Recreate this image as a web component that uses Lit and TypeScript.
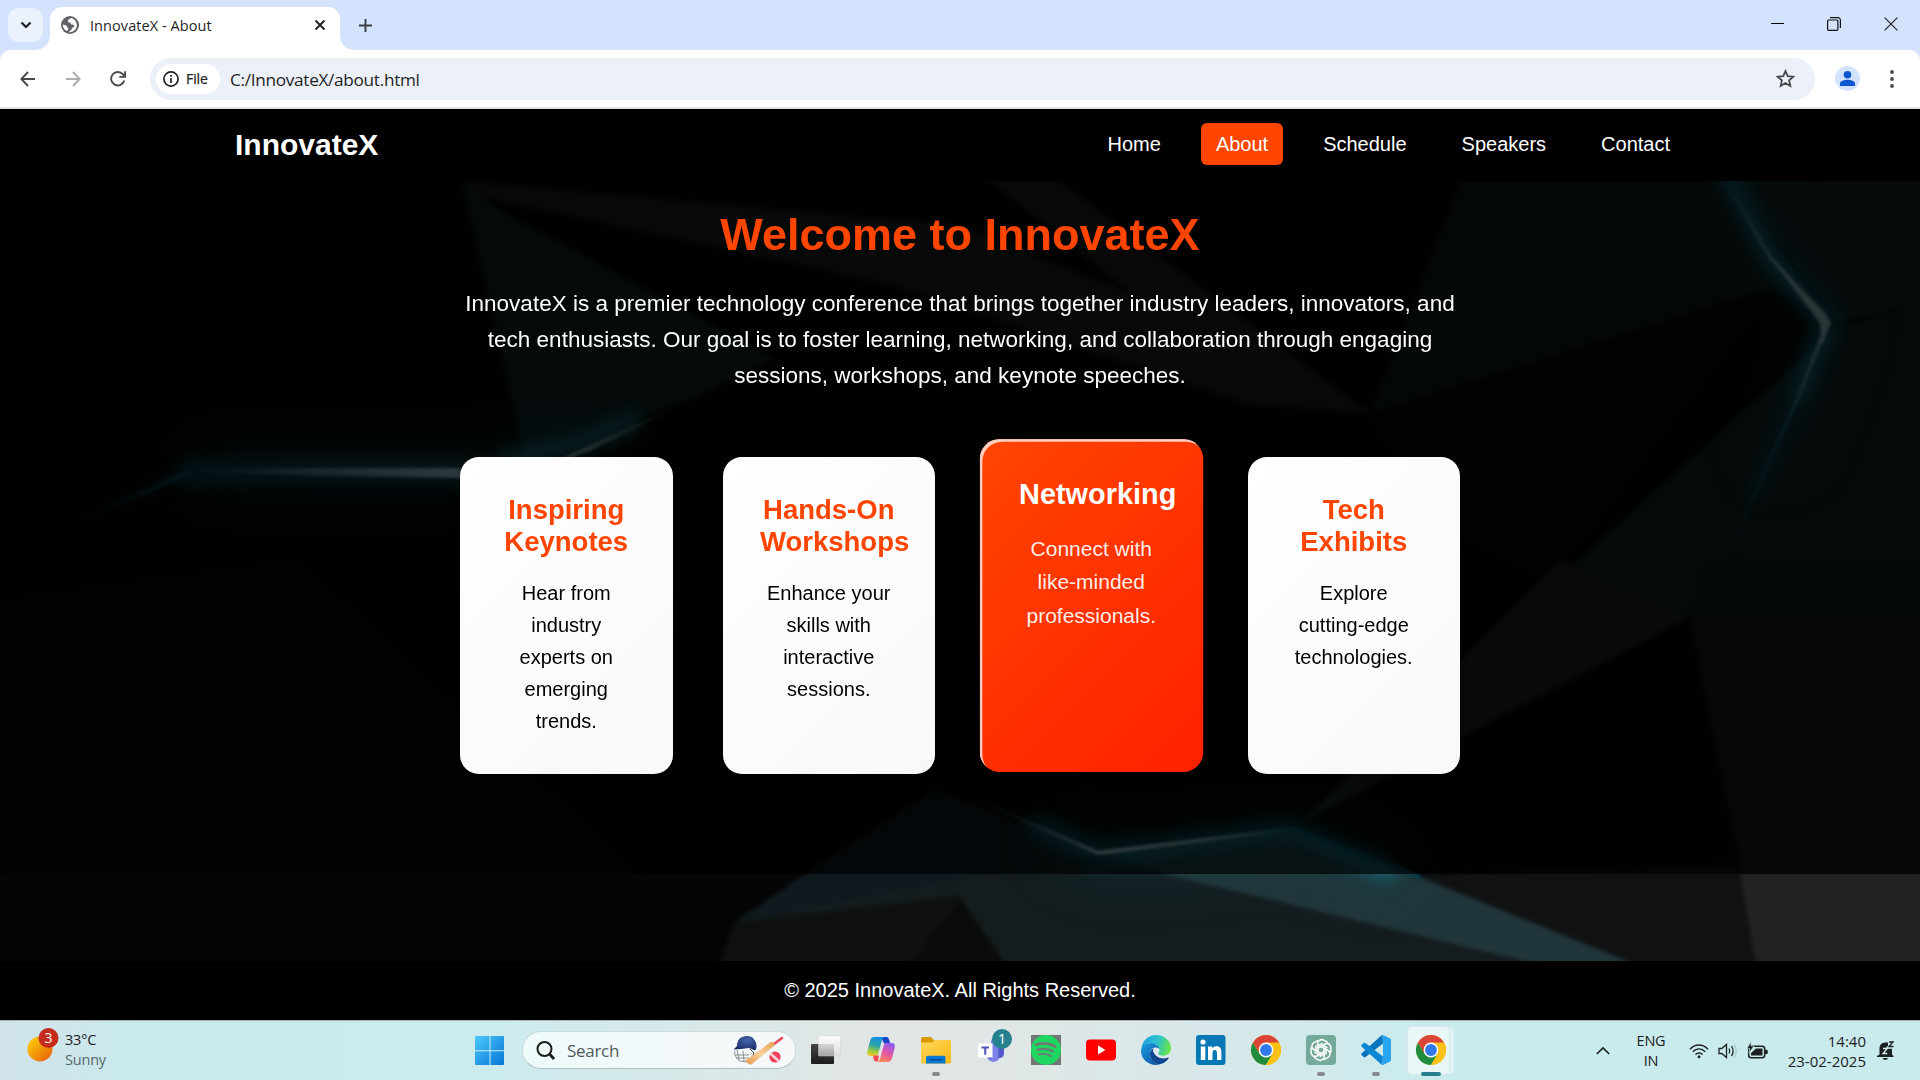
import { LitElement, html, css, svg } from "lit";
import { customElement } from "lit/decorators.js";

const chromeLogo = () => svg`
  <circle cx="15" cy="15" r="15" fill="#fbc116"/>
  <path d="M2 7.5 A15 15 0 0 0 15 30 L21.5 18.7 L15 15 L8.5 18.8 Z" fill="#1e8e3e"/>
  <path d="M28 7.5 A15 15 0 0 1 15 30 L21.5 18.8 L15 7.5 Z" fill="#fbc116"/>
  <path d="M2 7.5 A15 15 0 0 1 28 7.5 L15 7.5 L9 12 L8.5 18.8 Z" fill="#db4437"/>
  <circle cx="15" cy="15" r="7.4" fill="#fff"/>
  <circle cx="15" cy="15" r="5.9" fill="#3079ea"/>`;

@customElement("browser-chrome")
class BrowserChrome extends LitElement {
  static styles = css`
    :host { display: block; background: #d3e2fd; font-family: "Open Sans", "Noto Sans", sans-serif; color: #1f1f1f; }
    svg { display: block; flex: none; }
    .strip { display: flex; height: 50px; align-items: flex-end; }
    .menu { width: 35px; height: 34px; margin: 0 7px 8px 8px; border-radius: 11px; background: #ebf1fd; display: grid; place-items: center; }
    .tab { position: relative; width: 290px; height: 43px; box-sizing: border-box; background: #fff; border-radius: 12px 12px 0 0; display: flex; align-items: center; padding: 0 14px 7px 11px; }
    .tab::before, .tab::after { content: ""; position: absolute; bottom: 0; width: 14px; height: 14px; }
    .tab::before { left: -14px; background: radial-gradient(circle at 0 0, transparent 13.5px, #fff 14px); }
    .tab::after { right: -14px; background: radial-gradient(circle at 100% 0, transparent 13.5px, #fff 14px); }
    .title { flex: 1; margin-left: 11px; font-size: 14.5px; line-height: 20px; letter-spacing: 0.07px; position: relative; top: 1px; }
    .plus { margin: 0 0 18px 19px; }
    .win { margin-left: auto; display: flex; align-items: center; gap: 43px; padding: 0 22px 19px 0; }
    .bar { display: flex; align-items: center; background: #fff; border-radius: 10px 10px 0 0; border-bottom: 2px solid #dfe4e3; box-sizing: border-box; height: 59px; }
    .nav { flex: none; display: flex; gap: 29px; padding-left: 20px; width: 150px; box-sizing: border-box; }
    .omni { flex: none; width: 1665px; height: 42px; border-radius: 21px; background: #ecf0f9; display: flex; align-items: center; box-sizing: border-box; padding: 0 20px 0 6px; }
    .chip { width: 64px; height: 30px; border-radius: 15px; background: #fff; display: flex; align-items: center; gap: 7px; box-sizing: border-box; padding-left: 7px; font-size: 14px; letter-spacing: -0.1px; -webkit-text-stroke: 0.25px #1f1f1f; }
    .url { flex: 1; margin-left: 10px; font-size: 17.2px; letter-spacing: -0.3px; position: relative; top: 0.5px; }
    .avatar { margin-left: 20px; }
    .dots { margin-left: 26px; }
  `;
  render() {
    return html`
      <div class="strip">
        <div class="menu"><svg width="12" height="8" viewBox="0 0 12 8"><path d="M1.5 1.5 6 6 10.5 1.5" fill="none" stroke="#1f1f1f" stroke-width="2.2"/></svg></div>
        <div class="tab">
          <svg width="18" height="18" viewBox="0 0 18 18">
            <circle cx="9" cy="9" r="9" fill="#5f6368"/>
            <path d="M10.5 1.9c-1.800.4-3.600 1.700-3.700 3 .1 1.200 1 1.800 2.400 1.700.6.6.2 1.600 1.400 1.800 1.300 0 2.300.2 2.600 1.500.2 1.100-.5 1.700-1.500 1.700-1 .3-.6 1.500-1.500 2.300-.8.8-2 1.300-2.600 2.300 3.600.6 7.300-1.800 8.200-5.600.6-3.700-1.600-7.400-5.300-8.700ZM1.800 8.600c.1 2.300.9 4.200 2.500 5.600.9.5 2.400.7 2.800-.2.5-1.100-.2-1.700-.6-2.500-.3-1.300-1.600-2-2.700-2.400Z" fill="#fff"/>
          </svg>
          <span class="title">InnovateX - About</span>
          <svg width="12" height="12" viewBox="0 0 12 12"><path d="m1.500 1.500 9 9m0-9-9 9" stroke="#1f1f1f" stroke-width="1.900"/></svg>
        </div>
        <svg class="plus" width="13" height="13" viewBox="0 0 13 13"><path d="M6.500 0v13M0 6.500h13" stroke="#3c4043" stroke-width="1.900"/></svg>
        <div class="win">
          <svg width="13" height="14" viewBox="0 0 13 14"><path d="M0 6.500h13" stroke="#000"/></svg>
          <svg width="14" height="14" viewBox="0 0 14 14" fill="none" stroke="#111" stroke-width="1.200"><rect x=".6" y="3" width="10.300" height="10.300" rx="1"/><path d="M3 .6h7.900a2.500 2.500 0 0 1 2.500 2.500v8"/></svg>
          <svg width="14" height="14" viewBox="0 0 14 14"><path d="m.6.600 12.800 12.800m0-12.800L.6 13.400" stroke="#222" stroke-width="1.200"/></svg>
        </div>
      </div>
      <div class="bar">
        <div class="nav">
          <svg width="16" height="16" viewBox="0 0 16 16" fill="none" stroke="#47494c" stroke-width="1.900"><path d="M15 8H1.500M8 1 1.400 8 8 15"/></svg>
          <svg width="16" height="16" viewBox="0 0 16 16" fill="none" stroke="#a9abad" stroke-width="1.900"><path d="M1 8h13.500M8 1l6.600 7L8 15"/></svg>
          <svg width="16" height="16" viewBox="0 0 16 16" fill="none" stroke="#47494c" stroke-width="1.900"><path d="M14.300 9.500A6.700 6.700 0 1 1 13 3.400L14.700 5.300M15 .2v5.700H9.300"/></svg>
        </div>
        <div class="omni">
          <div class="chip">
            <svg width="16" height="16" viewBox="0 0 16 16"><circle cx="8" cy="8" r="7.100" fill="none" stroke="#1f1f1f" stroke-width="1.700"/><path d="M8 7v5M8 4v1.800" stroke="#1f1f1f" stroke-width="1.700"/></svg>
            <span>File</span>
          </div>
          <span class="url">C:/InnovateX/about.html</span>
          <svg width="19" height="19" viewBox="0 0 19 19"><path d="m9.500 2 2.200 5.200 5.600.5-4.200 3.700 1.200 5.500-4.800-2.900-4.800 2.900 1.200-5.500L1.700 7.700l5.600-.5Z" fill="none" stroke="#47494c" stroke-width="1.800"/></svg>
        </div>
        <svg class="avatar" width="25" height="25" viewBox="0 0 25 25"><circle cx="12.500" cy="12.500" r="12.500" fill="#d3e3fd"/><circle cx="12.500" cy="8.800" r="3.800" fill="#0b57d0"/><path d="M5 20v-2.500c0-2.600 4.500-3.700 7.500-3.700s7.500 1.100 7.500 3.700V20Z" fill="#0b57d0"/></svg>
        <svg class="dots" width="12" height="18" viewBox="0 0 12 18" fill="#47494c"><circle cx="6" cy="2" r="1.900"/><circle cx="6" cy="9" r="1.900"/><circle cx="6" cy="16" r="1.900"/></svg>
      </div>`;
  }
}

@customElement("site-backdrop")
class SiteBackdrop extends LitElement {
  static styles = css`
    :host { display: block; }
    svg { display: block; width: 100%; height: 100%; }
    filter { color-interpolation-filters: sRGB; }
  `;
  render() {
    return html`<svg viewBox="0 181 1920 780" preserveAspectRatio="none">
      <defs>
        <filter id="fine" filterUnits="userSpaceOnUse" x="-100" y="0" width="2200" height="1100"><feGaussianBlur stdDeviation="1.500"/></filter>
        <filter id="glow" filterUnits="userSpaceOnUse" x="-100" y="0" width="2200" height="1100"><feGaussianBlur stdDeviation="8"/></filter>
        <filter id="haze" filterUnits="userSpaceOnUse" x="-100" y="0" width="2200" height="1100"><feGaussianBlur stdDeviation="30"/></filter>
        <filter id="edge" filterUnits="userSpaceOnUse" x="-100" y="0" width="2200" height="1100"><feGaussianBlur stdDeviation="2"/></filter>
        <linearGradient id="lg" gradientUnits="userSpaceOnUse" x1="70" y1="0" x2="460" y2="0"><stop offset="0" stop-color="#0a2c3a" stop-opacity="0"/><stop offset=".32" stop-color="#10495a"/><stop offset="1" stop-color="#98c4cc"/></linearGradient>
        <linearGradient id="lg2" gradientUnits="userSpaceOnUse" x1="560" y1="0" x2="695" y2="0"><stop offset="0" stop-color="#b0d2d4"/><stop offset="1" stop-color="#2c5054" stop-opacity="0"/></linearGradient>
        <linearGradient id="rg" gradientUnits="userSpaceOnUse" x1="0" y1="181" x2="0" y2="620"><stop offset="0" stop-color="#0c4b58"/><stop offset=".3" stop-color="#a0c4c4"/><stop offset=".55" stop-color="#155f70"/><stop offset="1" stop-color="#062028" stop-opacity="0"/></linearGradient>
        <linearGradient id="bg" gradientUnits="userSpaceOnUse" x1="970" y1="0" x2="1440" y2="0"><stop offset="0" stop-color="#0c4b58" stop-opacity="0"/><stop offset=".28" stop-color="#a4c8cc"/><stop offset=".5" stop-color="#7ca8ac"/><stop offset=".7" stop-color="#0a5a6a"/><stop offset="1" stop-color="#06404c"/></linearGradient>
      </defs>
      <rect y="181" width="1920" height="780" fill="#050505"/>
      <g filter="url(#edge)">
        <path d="M462 181 960 225 1250 340 1370 413 1250 405 890 285 470 195Z" fill="#1a1b1b"/>
        <path d="M975 170h70l325 243-180-73Z" fill="#1b1b1b"/>
        <path d="M462 181 500 210 775 358 690 400 525 460Z" fill="#101f22"/>
        <path d="M1370 413 1465 171H1728l94 143-50-26Z" fill="#10191a"/>
        <path d="M1775 288 1370 413 1430 520 1550 580Z" fill="#060a0a"/>
        <path d="M1728 171h202v130l-92 22Z" fill="#142224"/>
        <path d="M1835 328 1930 300v300l-220 20-155-40Z" fill="#101e20"/>
        <path d="M1560 560 1690 617 1465 735 1300 824Z" fill="#1c2423"/>
        <path d="M1690 617h240v257h-188Z" fill="#171919"/>
        <path d="M1706 560h224v57h-240Z" fill="#101c1e"/>
        <path d="M935 790 1098 852 1000 900 735 922 806 873Z" fill="#10191e"/>
        <path d="M735 922 1000 872 1130 860 1535 961V975H1000L960 905Z" fill="#141c1e"/>
        <path d="M735 922 960 896 1003 961V975H715Z" fill="#0e1110"/>
        <path d="M960 900 1003 961V975H900Z" fill="#0b0b0b"/>
        <path d="M1098 852 1293 829 1413 874 1640 966 1545 966 1165 874Z" fill="#21363a"/>
        <path d="M1413 874 1740 864 1757 970H1650Z" fill="#101113"/>
        <path d="M1740 874h190v96h-173Z" fill="#222"/>
        <path d="M0 600 300 560 640 874H0Z" fill="#06080b"/>
      </g>
      <g fill="none" filter="url(#haze)">
        <path d="M190 470H470L600 440" stroke="#0a6575" stroke-width="30" opacity=".45"/>
        <path d="M1735 200 1828 322 1775 460" stroke="#0a5564" stroke-width="22" opacity=".4"/>
        <path d="M1060 830 1110 855 1293 835 1400 870" stroke="#0a6575" stroke-width="26" opacity=".4"/>
      </g>
      <g fill="none" filter="url(#glow)">
        <path d="M80 522 190 470H470L560 452 640 422" stroke="url(#lg)" stroke-width="10" opacity=".35"/>
        <path d="M180 472H470" stroke="#0b6070" stroke-width="26" opacity=".5"/>
        <path d="M500 462 580 444 640 418" stroke="#0d7b85" stroke-width="20" opacity=".55"/>
        <path d="M1725 171 1771 258 1828 322 1797 400" stroke="#0f8ba0" stroke-width="18" opacity=".65"/>
        <path d="M1797 400 1752 500" stroke="#0b6070" stroke-width="12" opacity=".5"/>
        <path d="M1030 822 1100 855 1293 830" stroke="#0a8294" stroke-width="20" opacity=".55"/>
        <path d="M1293 832 1395 874" stroke="#0a8294" stroke-width="16" opacity=".6"/>
      </g>
      <g fill="none" filter="url(#fine)">
        <path d="M75 522 190 472" stroke="url(#lg)" stroke-width="6"/>
        <path d="M188 471 300 468 461 468V478L300 475Z" fill="url(#lg)"/>
        <path d="M555 462 695 398 590 450Z" fill="url(#lg2)" stroke="url(#lg2)"/>
        <path d="M1725 181 1771 258 1828 322 1797 400 1752 500 1713 610" stroke="url(#rg)" stroke-width="3.500" stroke-linejoin="round"/>
        <path d="M1771 258 1826 314 1831 323 1822 345 1820 323Z" fill="#8fb4b4"/>
        <path d="M972 798 1098 853 1293 829 1420 877" stroke="url(#bg)" stroke-width="4"/>
      </g>
    </svg>`;
  }
}

@customElement("feature-card")
class FeatureCard extends LitElement {
  static properties = { heading: {}, text: {}, active: { type: Boolean, reflect: true } };
  declare heading: string;
  declare text: string;
  declare active: boolean;
  static styles = css`
    :host { display: block; box-sizing: border-box; padding: 36.5px 37.5px; border-radius: 19px; background: linear-gradient(135deg, #fff, #f8f8f8); color: #000; text-align: center; box-shadow: 0 6px 15px rgba(0, 0, 0, 0.3); }
    :host([active]) { background: linear-gradient(135deg, #ff4500, #ff2000); color: #fff; transform: translateY(-10px) scale(1.05); box-shadow: inset 2.5px 2.5px 0 rgba(255, 255, 255, 0.75); }
    .heading { margin: 0 0 19.5px; font-size: 27.5px; line-height: 32px; font-weight: 700; color: #ff4500; }
    .body { margin: 0; font-size: 20px; line-height: 32px; }
    :host([active]) .heading { color: #fff; }
    :host([active]) .body { color: rgba(255, 255, 255, 0.93); }
  `;
  render() {
    return html`<h3 class="heading">${this.heading}</h3><p class="body">${this.text}</p>`;
  }
}

@customElement("site-page")
class SitePage extends LitElement {
  static styles = css`
    :host { display: flex; flex-direction: column; height: 911px; background: #000; color: #fff; font-family: "Liberation Sans", Arial, sans-serif; }
    .header { height: 72px; display: flex; align-items: center; justify-content: space-between; padding: 0 235px; }
    .brand { font-size: 30px; line-height: 34px; font-weight: 700; }
    .links { display: flex; gap: 25px; margin-bottom: 2px; }
    .link { font-size: 20px; line-height: 22px; padding: 10px 15px; border-radius: 6px; }
    .link.on { background: #ff4500; }
    .main { flex: 1; position: relative; display: flex; flex-direction: column; }
    .backdrop { position: absolute; inset: 0; }
    .about { position: relative; height: 693px; background: rgba(0, 0, 0, 0.7); display: flex; flex-direction: column; align-items: center; box-sizing: border-box; padding-top: 28px; }
    .hero { margin: 0; font-size: 45px; line-height: 51px; font-weight: 700; color: #ff4500; }
    .intro { margin: 25.5px 0 0; width: 1000px; text-align: center; font-size: 22.5px; line-height: 36px; }
    .cards { margin-top: 63.5px; width: 1000px; height: 317px; display: grid; grid-template-columns: repeat(4, 212.5px); gap: 50px; }
    .footer { height: 59px; display: grid; place-items: center; font-size: 20px; }
  `;
  render() {
    const links = ["Home", "About", "Schedule", "Speakers", "Contact"];
    const cards = [
      ["Inspiring Keynotes", "Hear from industry experts on emerging trends."],
      ["Hands-On Workshops", "Enhance your skills with interactive sessions."],
      ["Networking", "Connect with like-minded professionals."],
      ["Tech Exhibits", "Explore cutting-edge technologies."],
    ];
    return html`
      <header class="header">
        <div class="brand">InnovateX</div>
        <nav class="links">${links.map((l) => html`<a class="link ${l === "About" ? "on" : ""}">${l}</a>`)}</nav>
      </header>
      <main class="main">
        <site-backdrop class="backdrop"></site-backdrop>
        <section class="about">
          <h1 class="hero">Welcome to InnovateX</h1>
          <p class="intro">InnovateX is a premier technology conference that brings together industry leaders, innovators, and tech enthusiasts. Our goal is to foster learning, networking, and collaboration through engaging sessions, workshops, and keynote speeches.</p>
          <div class="cards">
            ${cards.map(([h, t]) => html`<feature-card .heading=${h} .text=${t} ?active=${h === "Networking"}></feature-card>`)}
          </div>
        </section>
      </main>
      <footer class="footer">© 2025 InnovateX. All Rights Reserved.</footer>`;
  }
}

const petals = [0, 60, 120, 180, 240, 300];

const apps: { icon: unknown; mark?: "dot" | "on" }[] = [
  { icon: svg`<defs><linearGradient id="tv" x1="0" y1="0" x2="0" y2="1"><stop offset="0" stop-color="#454545"/><stop offset="1" stop-color="#1c1c1c"/></linearGradient><linearGradient id="tw" x1="0" y1="0" x2="0" y2="1"><stop offset="0" stop-color="#fff" stop-opacity=".95"/><stop offset="1" stop-color="#dcdcdc" stop-opacity=".68"/></linearGradient></defs><rect y="9" width="23" height="20" rx="1" fill="url(#tv)"/><rect x="7.500" y="1" width="22" height="20" rx="1" fill="url(#tw)" stroke="#d4d4d4" stroke-width=".5"/>` },
  { icon: svg`<defs><linearGradient id="ca" x1=".5" y1="0" x2=".3" y2="1"><stop offset="0" stop-color="#0d91e0"/><stop offset=".45" stop-color="#31a4a8"/><stop offset=".75" stop-color="#9ccc3c"/><stop offset="1" stop-color="#f5c52c"/></linearGradient><linearGradient id="cb" x1=".7" y1="0" x2=".3" y2="1"><stop offset="0" stop-color="#8f5cf0"/><stop offset=".5" stop-color="#e155a8"/><stop offset="1" stop-color="#fb8a56"/></linearGradient></defs>
    <path d="M15 2h5.500c1.700 0 2.300 1.500 2.700 3l1 3.500H18Z" fill="#1b44c8"/><path d="M8 2h11c-2 0-2.700 2-3.200 3.800L12.500 18c-.6 2-1.500 3-3.500 3H4.500C1.500 21 .7 18.500 1.500 15.500L4 6C4.800 3.500 6 2 8 2Z" fill="url(#ca)"/><path d="M7 20.500h6l-1 6h-2c-2 0-2.300-1.500-3-6Z" fill="#ef4b50"/><path d="M22 27H11c2 0 2.700-2 3.200-3.800L17.500 11c.6-2 1.500-3 3.500-3h5c2.500 0 3.500 2 2.700 5L26 23c-.8 2.500-2 4-4 4Z" fill="url(#cb)"/>` },
  { icon: svg`<defs><linearGradient id="fy" x1="0" y1="0" x2="1" y2="1"><stop offset="0" stop-color="#ffd75c"/><stop offset="1" stop-color="#fbb917"/></linearGradient></defs><path d="M0 4c0-1 .6-2 1.800-2H10l3.500 3.500H27L12 10H0Z" fill="#d99a00"/><path d="M0 7.500h11L15 5h13.500C29.500 5 30 5.600 30 6.500V27c0 1-.6 1.500-1.500 1.500H1.500C.6 28.500 0 28 0 27Z" fill="url(#fy)"/><path d="M5 28.500V23c0-1.400.8-2.200 2-2.200h15.500c1.300 0 2 .8 2 2.200v5.500Z" fill="#0b78d0"/><path d="M8.500 24.700h12.500" stroke="#084d93" stroke-width="1.400"/>`, mark: "dot" },
  { icon: svg`<circle cx="19" cy="7" r="4" fill="#7b83eb"/><path d="M11 10h13v10c0 4-2.700 6.800-6.500 6.800S11 24 11 20Z" fill="#7b83eb"/><path d="M22 10h6v8c0 3-1.500 5-5.500 5Z" fill="#5059c9"/><path d="M11 10h5v14h-3c-1.300-1-2-2.500-2-4Z" fill="#5a63cf"/><rect x="2" y="8.500" width="14.500" height="14" fill="#fff"/><path d="M5.500 12.500h7.500M9.250 12v7.800" stroke="#4b53bc" stroke-width="2"/><circle cx="26" cy="4" r="10" fill="#26818f"/><text x="26" y="9" text-anchor="middle" font-size="15" fill="#fff">1</text>` },
  { icon: svg`<rect width="30" height="30" fill="#757575"/><circle cx="15" cy="15" r="15" fill="#1ed760"/><g fill="none" stroke="#6f7a72" stroke-linecap="round"><path d="M5.500 9.500c6-1.700 13-1.200 18.500 2" stroke-width="2.800"/><path d="M6.500 14.700c5.500-1.500 11-.9 15.500 1.800" stroke-width="2.300"/><path d="M7.500 19.500c4.500-1.200 9-.7 12.700 1.500" stroke-width="1.900"/></g>` },
  { icon: svg`<rect y="4.500" width="30" height="21" rx="4" fill="#f00"/><path d="M12 10.500v9l7.500-4.500Z" fill="#fff"/>` },
  { icon: svg`<defs><linearGradient id="eg" x1="0" y1=".3" x2="1" y2=".5"><stop offset="0" stop-color="#1aa3e0"/><stop offset=".55" stop-color="#2fc3c8"/><stop offset="1" stop-color="#6ae544"/></linearGradient><linearGradient id="eb" x1="0" y1="0" x2="1" y2="1"><stop offset="0" stop-color="#1b9de2"/><stop offset="1" stop-color="#0b4fa0"/></linearGradient></defs>
    <path d="M.5 13C1.500 5.500 7.500 0 15 0c8.500 0 15 6 15 13 0 5-3.800 7.700-7.800 7.700-3 0-5-1-5-2.200 0-.8 1.300-1.500 1.300-3.500 0-3-3.500-6-8.500-6C5.500 9 2 11 .5 13Z" fill="url(#eg)"/>
    <path d="M.5 13C2 10 5.500 8.500 9.500 8.500c5 0 8.500 2.500 9 5.500-1-1-2.500-1.500-4-1.500-3.500 0-5.500 3-5.500 6.500 0 5 3.500 9 9 10.600C9 31.500 0 25 0 16Z" fill="url(#eb)"/>
    <path d="M11.500 14c-3.500 4-1.500 11 5 13 4 1 8 .2 11-3.500.5-.6 0-1.200-.8-.8-5.500 2-13.500.3-15.200-8.700Z" fill="#0d3f86"/>
    <path d="M9 19c0 5 3.500 9.500 9 10.600 3.500-.6 7-2.500 9.300-5.800-4 2-9 2-12.300-1C12 20.500 11 17 12.500 13.500 10 14.500 9 17 9 19Z" fill="#104a94"/>` },
  { icon: svg`<rect width="29.500" height="30" rx="3" fill="#0877b5"/><circle cx="7" cy="7" r="2.600" fill="#fff"/><path d="M4.800 11.500h4.500V25H4.800ZM12 11.500h4.200v1.900c.8-1.400 2.300-2.200 4.200-2.200 4 0 5 2.600 5 6.300V25H21v-6.500c0-1.900-.3-3.400-2.200-3.400S16.500 16.500 16.500 18.500V25H12Z" fill="#fff"/>` },
  { icon: chromeLogo() },
  { icon: svg`<rect width="30" height="30" rx="4" fill="#74aa9c"/><g fill="none" stroke="#fff" stroke-width="1.500" stroke-linejoin="round">${petals.map((a) => svg`<path transform="rotate(${a} 15 15)" d="M15 11.500 20 14.300V19.500M11.800 13.200V8.500C11.800 5.500 15 3.700 17.800 5.200L22 7.700"/>`)}</g>`, mark: "dot" },
  { icon: svg`<path d="M21.500 0 22 8.500 4.500 22c-.6.500-1.300.4-1.800 0L.7 20.200c-.7-.6-.6-1.500 0-2L20 .7Z" fill="#0873bd"/><path d="M21.500 30 22 21.500 4.500 8c-.6-.5-1.300-.4-1.800 0L.7 9.800c-.7.6-.6 1.500 0 2L20 29.300Z" fill="#0a86d2"/><path d="M22 0 28.700 3.200c.8.4 1.300 1 1.300 2V24.800c0 1-.5 1.600-1.300 2L22 30c-1 .2-1.800-.5-2-1 1 .8 2 .3 2-1V2c0-1.300-1-1.800-2-1 .2-.6 1-1.200 2-1Z" fill="#27a5f2"/>`, mark: "dot" },
  { icon: chromeLogo(), mark: "on" },
];

@customElement("task-bar")
class TaskBar extends LitElement {
  static styles = css`
    :host { display: flex; align-items: stretch; height: 60px; box-sizing: border-box; border-top: 1px solid #a9b3b5; font-family: "Open Sans", "Noto Sans", sans-serif; color: #1c2021; font-size: 14.5px; line-height: 20px; background: linear-gradient(90deg, #d0e2ea 0, #c9ebee 150px, #cbebee 480px, #d5e9ea 640px, #e2e5e5 880px, #e0e6e6 1010px, #d6e8ea 1250px, #caebed 1420px, #c9ebed 100%); }
    svg { display: block; overflow: visible; flex: none; }
    .weather { width: 475px; display: flex; box-sizing: border-box; padding: 9px 0 0 27px; gap: 6px; letter-spacing: -0.2px; }
    .muted { color: #54686b; }
    .start { padding-top: 15px; width: 47px; }
    .search { width: 274px; height: 38px; margin: 10px 2.5px 0 0; box-sizing: border-box; border-radius: 20px; border: 1px solid #cddcde; border-bottom-color: #aebfc2; background: linear-gradient(90deg, #effafb, #f6f8f9); display: flex; align-items: center; padding: 0 12px 0 13px; gap: 12px; }
    .hint { flex: 1; font-size: 17px; letter-spacing: -0.3px; color: #4e5a5c; position: relative; top: 1px; }
    .apps { display: flex; }
    .app { width: 55px; display: flex; flex-direction: column; align-items: center; padding-top: 14px; box-sizing: border-box; position: relative; }
    .app.on::before { content: ""; position: absolute; left: 3.5px; top: 5px; width: 43px; height: 49px; box-sizing: border-box; border-radius: 5px; background: #e8f6f7; border: 1px solid #d7e9ea; box-shadow: 5px 0 0 -1px #e0f2f3; }
    .app svg { position: relative; }
    .mark { position: relative; margin-top: 7px; width: 8px; height: 4px; border-radius: 2px; background: #858b8c; }
    .on .mark { width: 20px; background: #26818f; }
    .tray { margin-left: auto; display: flex; align-items: center; padding-right: 26px; }
    .chev { margin-right: 21px; }
    .lang { text-align: center; width: 40px; letter-spacing: -0.2px; margin-right: 18px; }
    .icons { display: flex; align-items: center; gap: 9px; width: 80px; }
    .clock { text-align: right; width: 97px; font-size: 15px; letter-spacing: 0; margin-right: 11px; }
  `;
  render() {
    return html`
      <div class="weather">
        <svg width="32" height="40" viewBox="0 0 32 40"><defs><linearGradient id="sun" x1="0" y1="0" x2="1" y2="1"><stop offset="0" stop-color="#ffd60a"/><stop offset="1" stop-color="#e65a06"/></linearGradient></defs><circle cx="13" cy="19" r="12.500" fill="url(#sun)"/><circle cx="21.500" cy="8" r="10" fill="#c42b1c"/><text x="21.500" y="13" text-anchor="middle" font-size="14" fill="#fff">3</text></svg>
        <div><div>33°C</div><div class="muted">Sunny</div></div>
      </div>
      <div class="start"><svg width="30" height="30" viewBox="0 0 30 30"><defs><linearGradient id="w" gradientUnits="userSpaceOnUse" x1="0" y1="0" x2="30" y2="30"><stop offset="0" stop-color="#4cc9fb"/><stop offset="1" stop-color="#0273d4"/></linearGradient></defs><path d="M1 0h13.500v14.300H0V1q0-1 1-1ZM15.500 0H28q1 0 1 1v13.300H15.500ZM0 15.300h14.500V29H1q-1 0-1-1ZM15.500 15.300H29V28q0 1-1 1H15.500Z" fill="url(#w)"/></svg></div>
      <div class="search">
        <svg width="19" height="19" viewBox="0 0 19 19"><circle cx="8.500" cy="8" r="7" fill="none" stroke="#1c1c1c" stroke-width="2"/><path d="m13.500 13 4.500 5" stroke="#1c1c1c" stroke-width="2.800"/></svg>
        <span class="hint">Search</span>
        <svg width="50" height="30" viewBox="0 0 50 30">
          <defs><linearGradient id="bat" x1="0" y1="1" x2="1" y2="0"><stop offset="0" stop-color="#e59a4c"/><stop offset=".5" stop-color="#fad09a"/><stop offset="1" stop-color="#e4a254"/></linearGradient><radialGradient id="helm" cx=".6" cy=".3" r=".7"><stop offset="0" stop-color="#4566ae"/><stop offset="1" stop-color="#1c2c66"/></radialGradient></defs>
          <g fill="none" stroke="#8b9295" stroke-width="1"><path d="M2 16c-1 3 1 8 5 10l7 1M2 20h14M4 15l2 10M10 16l1 10M3 23h13"/><path d="M17 14l4 4-2 5" stroke="#34404a"/></g>
          <path d="M.5 14.500 4 11C4 4.500 8 1 14 1s9.500 5 9.500 10c0 2-.5 3.500-1.500 4.500l-6-2.500C10 14 6 14 .5 14.500Z" fill="url(#helm)"/>
          <path d="m41 9 8-6" stroke="#e04858" stroke-width="2.600" stroke-linecap="round"/>
          <path d="M12.500 25.500 37 7.500c1.500-.8 3-.5 4 .5s1 2 0 3L19 29c-1 .8-2 .8-3 0l-3.500-2.500Z" fill="url(#bat)"/>
          <circle cx="42" cy="22" r="5.600" fill="#ee3f59"/><path d="m37.500 18.500 8 7.500" stroke="#fbd3da" stroke-width="2.600"/>
        </svg>
      </div>
      <div class="apps">
        ${apps.map((a) => html`<div class="app ${a.mark === "on" ? "on" : ""}"><svg width="30" height="30" viewBox="0 0 30 30">${a.icon}</svg>${a.mark ? html`<i class="mark"></i>` : ""}</div>`)}
      </div>
      <div class="tray">
        <svg class="chev" width="14" height="8" viewBox="0 0 14 8"><path d="M.8 7 7 1l6.200 6" fill="none" stroke="#1c2021" stroke-width="1.700"/></svg>
        <div class="lang">ENG<br/>IN</div>
        <div class="icons">
          <svg width="20" height="16" viewBox="0 0 20 16" fill="none" stroke="#1c2021" stroke-width="1.400"><path d="M1 6.200c5-5.700 13-5.700 18 0M3.800 8.800c3.600-3.900 8.800-3.900 12.400 0M6.500 11.500c2-2.100 5-2.100 7 0"/><circle cx="10" cy="13.700" r="1.500" fill="#1c2021" stroke="none"/></svg>
          <svg width="20" height="16" viewBox="0 0 20 16" fill="none" stroke="#1c2021" stroke-width="1.300"><path d="M1 5.500h2.800L8.500 1.500v13L3.800 10.500H1ZM11 5.500q1.600 2.500 0 5M13.500 3q3.200 5 0 10"/><path d="M16 1.200q4.500 6.800 0 13.600" stroke="#a9c5c8"/></svg>
          <svg width="21" height="17" viewBox="0 0 21 17"><rect x="1.700" y="4.200" width="16" height="11.500" rx="2.500" fill="none" stroke="#1c2021" stroke-width="1.500"/><path d="M9 6.500h6.500v7H4V11l5-4.500ZM18 7.700h1.500q1.200 0 1.200 1.200v2q0 1.200-1.200 1.200H18Z" fill="#1c2021"/><path d="M4-.5 0 6.500h2.700L2 11l5-7H4Z" fill="#1c2021" stroke="#c9ebed" stroke-width=".6"/></svg>
        </div>
        <div class="clock">14:40<br/>23-02-2025</div>
        <svg width="17" height="19" viewBox="0 0 17 19"><path d="M2.500 13.500V7.500C2.500 3.500 5 1.500 9 1.500h2V5h4v8.500l1.500 1.500v1H0v-1ZM5.500 17h5.500q-.7 2-2.700 2t-2.800-2Z" fill="#1c2021"/><path d="M6 7.500h4.300L6 12.500h4.300" fill="none" stroke="#d9f1f3" stroke-width="1.300"/><path d="M11.500 1.200h4.500l-4.500 5h5" fill="none" stroke="#c9ebed" stroke-width="3"/><path d="M12 1h4l-4 4.500h4.500" fill="none" stroke="#1c2021" stroke-width="1.300"/></svg>
      </div>`;
  }
}

@customElement("app-root")
class AppRoot extends LitElement {
  static styles = css`
    :host { display: flex; flex-direction: column; width: 1920px; height: 1080px; overflow: hidden; background: #000; }
  `;
  render() {
    return html`<browser-chrome></browser-chrome><site-page></site-page><task-bar></task-bar>`;
  }
}
